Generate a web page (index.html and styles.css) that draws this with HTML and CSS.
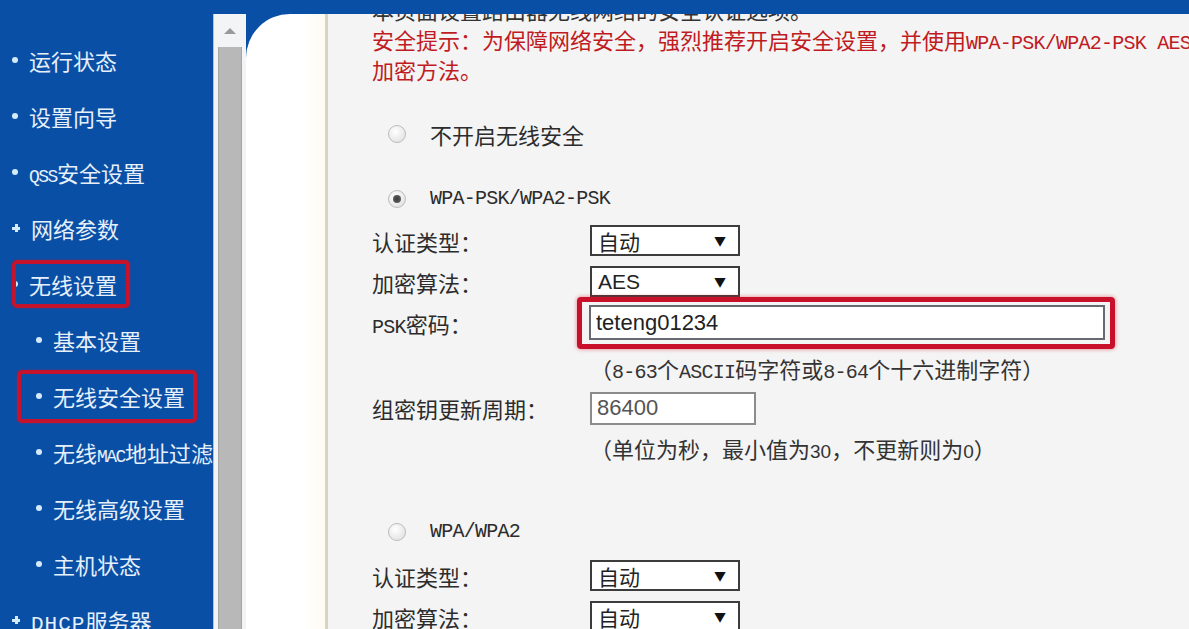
FILE: index.html
```html
<!DOCTYPE html>
<html lang="zh-CN">
  <head>
    <meta charset="UTF-8" />
    <title>无线安全设置</title>
    <link rel="stylesheet" href="styles.css">
  </head>
  <body>
    <div class="topbar"></div>
    <div class="main">
      <ul class="menu">
        <li class="item"><span class="dot"></span>运行状态</li>
        <li class="item"><span class="dot"></span>设置向导</li>
        <li class="item"><span class="dot"></span><span><span class="en">QSS</span>安全设置</span></li>
        <li class="item"><span class="plus"></span>网络参数</li>
        <li class="item"><span class="dot"></span><span class="mark">无线设置</span></li>
        <li class="item sub"><span class="dot"></span>基本设置</li>
        <li class="item sub"><span class="mark mark-sub"><span class="dot"></span>无线安全设置</span></li>
        <li class="item sub"><span class="dot"></span><span>无线<span class="en">MAC</span>地址过滤</span></li>
        <li class="item sub"><span class="dot"></span>无线高级设置</li>
        <li class="item sub"><span class="dot"></span>主机状态</li>
        <li class="item"><span class="plus"></span><span><span class="en en-wide">DHCP</span>服务器</span></li>
      </ul>
      <div class="scroll">
        <div class="scroll-up"><span class="arrow"></span></div>
        <div class="scroll-thumb"></div>
      </div>
      <div class="gutter"></div>
      <div class="content">
        <div class="page">
          <div class="intro">本页面设置路由器无线网络的安全认证选项。</div>
          <div class="warn">安全提示：为保障网络安全，强烈推荐开启安全设置，并使用<span class="en">WPA-PSK/WPA2-PSK AES</span><br>加密方法。</div>

          <div class="opt first"><span class="radio"></span><span>不开启无线安全</span></div>

          <div class="opt second"><span class="radio on"></span><span class="en">WPA-PSK/WPA2-PSK</span></div>
          <div class="row first-row">
            <span class="label">认证类型：</span>
            <div class="select"><span>自动</span><span class="caret">▼</span></div>
          </div>
          <div class="row">
            <span class="label">加密算法：</span>
            <div class="select"><span class="latin">AES</span><span class="caret">▼</span></div>
          </div>
          <div class="row psk-row">
            <span class="label"><span class="en">PSK</span>密码：</span>
            <div class="mark-box"><div class="field field-psk">teteng01234</div></div>
          </div>
          <div class="help help-psk">（<span class="en">8-63</span>个<span class="en">ASCII</span>码字符或<span class="en">8-64</span>个十六进制字符）</div>
          <div class="row key-row">
            <span class="label">组密钥更新周期：</span>
            <div class="field field-key">86400</div>
          </div>
          <div class="help help-key">（单位为秒，最小值为<span class="latin small">30</span>，不更新则为<span class="latin small">0</span>）</div>

          <div class="opt third"><span class="radio"></span><span class="en">WPA/WPA2</span></div>
          <div class="row third-row">
            <span class="label">认证类型：</span>
            <div class="select"><span>自动</span><span class="caret">▼</span></div>
          </div>
          <div class="row">
            <span class="label">加密算法：</span>
            <div class="select"><span>自动</span><span class="caret">▼</span></div>
          </div>
        </div>
      </div>
    </div>
  </body>
</html>
```

FILE: styles.css
```css
html,
body {
  margin: 0;
  height: 100%;
  overflow: hidden;
}
body {
  background: #0a4fa6;
  font-family: "Noto Sans CJK SC", sans-serif;
}
.topbar {
  height: 14px;
}
.main {
  display: flex;
  height: 615px;
}

/* left menu */
.menu {
  width: 213px;
  flex: none;
  margin: 0;
  padding: 18px 0 0;
  list-style: none;
  overflow: hidden;
  white-space: nowrap;
  color: #e6f0fb;
  font-size: 22px;
}
.item {
  height: 56px;
  display: flex;
  align-items: center;
  gap: 11px;
  padding-left: 12px;
}
.item.sub {
  padding-left: 36px;
}
.dot {
  width: 6px;
  height: 6px;
  flex: none;
  border-radius: 50%;
  background: #d4ecf7;
}
.plus {
  width: 8px;
  height: 8px;
  flex: none;
  background:
    linear-gradient(#d4ecf7, #d4ecf7) center / 8px 3px no-repeat,
    linear-gradient(#d4ecf7, #d4ecf7) center / 3px 8px no-repeat;
}
.menu .en {
  font-family: "Liberation Mono", monospace;
  font-size: 18px;
  letter-spacing: -1.5px;
  line-height: 1;
}
.menu .en-wide {
  font-size: 21px;
  letter-spacing: 1px;
}
.mark {
  position: relative;
  display: inline-flex;
  align-items: center;
  line-height: 40px;
  margin-left: -17px;
  padding: 0 9px 0 13px;
  border: 4px solid #c4132c;
  border-radius: 5px;
  box-shadow: 0 0 2px rgba(200, 20, 40, 0.6);
}
.mark-sub {
  gap: 11px;
  line-height: 45px;
  margin-left: -19px;
  padding: 0 8px 0 15px;
}

/* fake scrollbar */
.scroll {
  width: 33px;
  flex: none;
  box-sizing: border-box;
  display: flex;
  flex-direction: column;
  background: #f3f4f5;
  border-left: 1px solid #9cc8ee;
}
.scroll-up {
  height: 33px;
  display: flex;
  align-items: center;
  justify-content: center;
}
.arrow {
  width: 0;
  height: 0;
  border-left: 6px solid transparent;
  border-right: 6px solid transparent;
  border-bottom: 6px solid #9a9a9a;
}
.scroll-thumb {
  flex: 1;
  margin: 0 4px;
  background: #b8b8b8;
  border-left: 1px solid #a6a6a6;
  border-right: 1px solid #a6a6a6;
}

.gutter {
  width: 79px;
  flex: none;
  background: linear-gradient(90deg, #ffffff 70%, #fdfbf1);
  border-top-left-radius: 44px;
}

/* main page */
.content {
  flex: 1;
  overflow: hidden;
  background: #f4f4f4;
  border-left: 3px solid #d8d3c4;
  color: #2c2c2c;
  font-size: 22px;
  white-space: nowrap;
}
.page {
  margin-top: -20px;
  padding-left: 44px;
}
.en {
  font-family: "Liberation Mono", monospace;
  font-size: 20px;
  letter-spacing: -0.75px;
  line-height: 1;
}
.latin {
  font-family: "Liberation Sans", sans-serif;
  font-size: 21px;
  line-height: 1;
}
.latin.small {
  font-size: 19px;
}
.intro {
  line-height: 30px;
  height: 30px;
  color: #333333;
}
.warn {
  line-height: 30px;
  height: 60px;
  color: #c01b22;
}
.opt {
  height: 40px;
  display: flex;
  align-items: center;
  gap: 24px;
  padding-left: 16px;
}
.opt.first {
  margin-top: 30px;
}
.opt.second {
  margin-top: 25px;
}
.opt.third {
  margin-top: 40px;
}
.radio {
  position: relative;
  width: 18px;
  height: 18px;
  flex: none;
  box-sizing: border-box;
  border-radius: 50%;
  border: 1px solid #bcbcbc;
  background: radial-gradient(circle at 40% 35%, #ffffff, #dcdcdc);
}
.radio.on::after {
  content: "";
  position: absolute;
  inset: 4px;
  border-radius: 50%;
  background: radial-gradient(circle, #3a3a3a, #6a6a6a);
}
.row {
  height: 41px;
  display: flex;
  align-items: center;
}
.row.first-row {
  margin-top: 1px;
}
.row.third-row {
  margin-top: 3px;
}
.psk-row {
  height: 42px;
}
.key-row {
  height: 32px;
}
.label {
  width: 218px;
  flex: none;
}
.select {
  width: 150px;
  height: 31px;
  box-sizing: border-box;
  display: flex;
  align-items: center;
  justify-content: space-between;
  padding: 0 12px 0 6px;
  border: 2px solid #3c3c3c;
  background: #ffffff;
  font-size: 21px;
  color: #222222;
}
.caret {
  font-size: 12px;
  color: #111111;
}
.mark-box {
  margin-left: -13px;
  padding: 3px 5px 4px 7px;
  border: 5px solid #c8102a;
  border-radius: 4px;
  box-shadow: 0 0 4px rgba(220, 20, 40, 0.55);
}
.field {
  box-sizing: border-box;
  display: flex;
  align-items: center;
  padding-left: 5px;
  background: #ffffff;
  font-family: "Liberation Sans", sans-serif;
  font-size: 22px;
  color: #222222;
}
.field-psk {
  width: 516px;
  height: 35px;
  border: 2px solid #666a70;
}
.field-key {
  width: 166px;
  height: 33px;
  border: 2px solid #8c8c8c;
  color: #555555;
}
.help {
  padding-left: 218px;
  color: #333333;
  height: 48px;
  line-height: 48px;
}
```
